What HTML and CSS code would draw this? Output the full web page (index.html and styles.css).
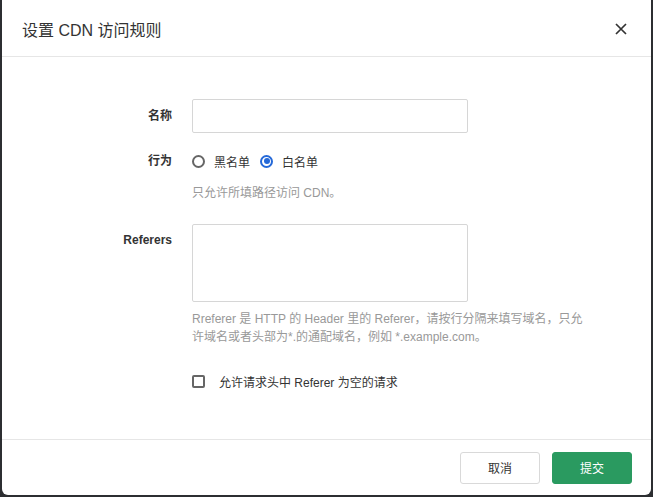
FILE: index.html
```html
<!DOCTYPE html>
<html lang="zh-CN">
<head>
    <meta charset="UTF-8">
    <title>设置 CDN 访问规则</title>
    <link rel="stylesheet" href="styles.css">
</head>
<body>
<div class="modal">
    <div class="modal-header">
        <h2 class="modal-title">设置 CDN 访问规则</h2>
        <span class="close">
            <svg width="12" height="12" viewBox="0 0 12 12"><path d="M1 1L11 11M11 1L1 11" stroke="#333" stroke-width="1.7" fill="none"/></svg>
        </span>
    </div>
    <div class="modal-body">
        <div class="row row-name">
            <label class="label">名称</label>
            <div class="field">
                <input class="input" type="text">
            </div>
        </div>
        <div class="row row-mode">
            <label class="label">行为</label>
            <div class="field">
                <div class="radios">
                    <span class="radio"><i class="dot"></i>黑名单</span>
                    <span class="radio checked"><i class="dot"></i>白名单</span>
                </div>
                <p class="hint">只允许所填路径访问 CDN。</p>
            </div>
        </div>
        <div class="row row-referers">
            <label class="label">Referers</label>
            <div class="field">
                <textarea class="textarea"></textarea>
                <p class="hint help">Rreferer 是 HTTP 的 Header 里的 Referer，请按行分隔来填写域名，只允许域名或者头部为*.的通配域名，例如 *.example.com。</p>
            </div>
        </div>
        <div class="row row-check">
            <span class="label"></span>
            <div class="field">
                <span class="checkbox"><i class="box"></i>允许请求头中 Referer 为空的请求</span>
            </div>
        </div>
    </div>
    <div class="modal-footer">
        <button class="btn">取消</button>
        <button class="btn primary">提交</button>
    </div>
</div>
</body>
</html>
```

FILE: styles.css
```css
* {
    padding: 0;
    margin: 0;
    box-sizing: border-box;
}

body {
    background: #2c2e31;
    font-family: "Liberation Sans", "Noto Sans CJK SC", sans-serif;
    color: #333;
    font-size: 12px;
}

.modal {
    margin: 0 2px;
    height: 495px;
    background: #fff;
    border-radius: 0 0 6px 6px;
    display: flex;
    flex-direction: column;
}

.modal-header {
    height: 57px;
    border-bottom: 1px solid #e6e6e6;
    display: flex;
    align-items: center;
    justify-content: space-between;
    padding: 2px 24px 0 20px;
}

.modal-title {
    font-size: 16px;
    font-weight: normal;
    color: #333;
}

.close {
    display: flex;
}

.modal-body {
    flex: 1;
    padding-top: 42px;
}

.row {
    display: grid;
    grid-template-columns: 170px 1fr;
    column-gap: 20px;
}

.label {
    text-align: right;
    font-weight: 600;
    line-height: 34px;
}

.row-mode {
    margin-top: 12px;
}

.row-mode .label {
    line-height: 32px;
}

.row-referers {
    margin-top: 22px;
}

.row-referers .label {
    line-height: 32px;
}

.row-check {
    margin-top: 25px;
}

.input {
    display: block;
    width: 276px;
    height: 34px;
    border: 1px solid #d6d6d6;
    border-radius: 2px;
    outline: none;
}

.textarea {
    display: block;
    width: 276px;
    height: 78px;
    border: 1px solid #d6d6d6;
    border-radius: 2px;
    resize: none;
    outline: none;
}

.radios {
    height: 32px;
    display: flex;
    align-items: center;
    gap: 10px;
}

.radio {
    display: flex;
    align-items: center;
    gap: 9px;
}

.dot {
    width: 13px;
    height: 13px;
    border: 2px solid #666;
    border-radius: 50%;
    position: relative;
}

.checked .dot {
    border-color: #2569d8;
}

.checked .dot::after {
    content: "";
    position: absolute;
    left: 1.5px;
    top: 1.5px;
    width: 6px;
    height: 6px;
    border-radius: 50%;
    background: #2569d8;
}

.hint {
    color: #999;
    line-height: 18px;
    margin-top: 7px;
}

.help {
    width: 394px;
    margin-top: 8px;
}

.checkbox {
    display: flex;
    align-items: center;
    gap: 14px;
    height: 20px;
}

.box {
    width: 13px;
    height: 13px;
    border: 2px solid #666;
    border-radius: 2px;
}

.modal-footer {
    height: 56px;
    border-top: 1px solid #e6e6e6;
    display: flex;
    justify-content: flex-end;
    align-items: center;
    gap: 12px;
    padding: 0 19px 0 0;
}

.btn {
    width: 80px;
    height: 32px;
    border: 1px solid #d9d9d9;
    border-radius: 3px;
    background: #fff;
    color: #333;
    font-family: inherit;
    font-size: 12px;
}

.btn.primary {
    background: #2a9a60;
    border-color: #2a9a60;
    color: #fff;
}
```
